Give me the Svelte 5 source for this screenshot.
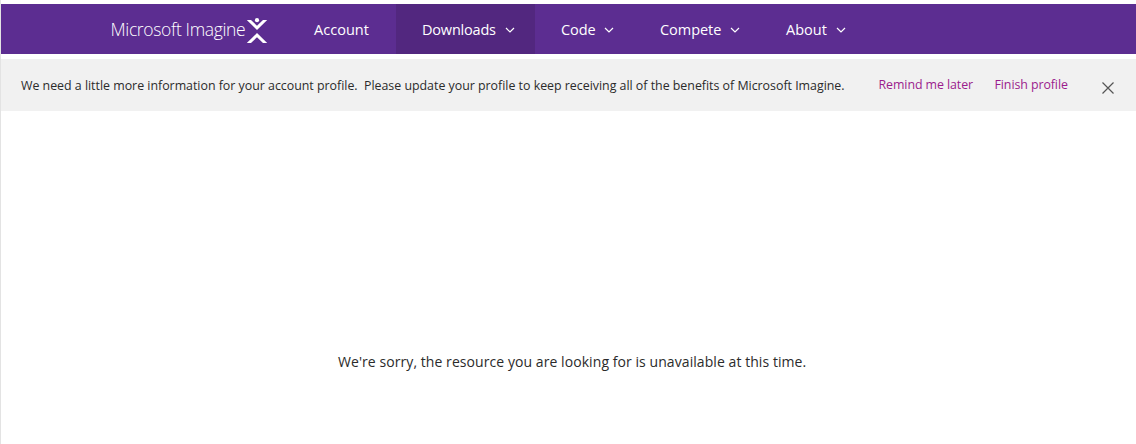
<script>
  const items = [
    { label: 'Account', width: 107, pad: 25, spacing: 0.03 },
    { label: 'Downloads', width: 139, pad: 26, spacing: -0.2, menu: true, active: true },
    { label: 'Code', width: 100, pad: 26, spacing: -0.1, menu: true },
    { label: 'Compete', width: 126, pad: 25, spacing: -0.05, menu: true },
    { label: 'About', width: 106, pad: 25, spacing: 0, menu: true }
  ];
</script>

<div class="page">
  <header>
    <a class="brand" href="#home">
      <span>Microsoft Imagine</span>
      <svg width="22" height="26" viewBox="0 0 22 26" fill="#fff">
        <circle cx="11" cy="2.2" r="2.1" />
        <path d="M.8 2H5L11 7.8L17 2H21.2L11 12Z" />
        <path d="M.8 25L11 15L21.2 25H17L11 19.2L5 25Z" />
      </svg>
    </a>
    <nav>
      {#each items as item}
        <a href="#{item.label}" class:active={item.active} style="width: {item.width}px; padding-left: {item.pad}px; letter-spacing: {item.spacing}px">
          <span>{item.label}</span>
          {#if item.menu}
            <svg width="10" height="7" viewBox="0 0 10 7" fill="none" stroke="#fff" stroke-width="1.2">
              <path d="M1 1L5 5L9 1" />
            </svg>
          {/if}
        </a>
      {/each}
    </nav>
  </header>
  <section class="notice">
    <p>We need a little more information for your account profile.&nbsp; Please update your profile to keep receiving all of the benefits of Microsoft Imagine.</p>
    <a class="later" href="#later">Remind me later</a>
    <a class="finish" href="#finish">Finish profile</a>
    <button aria-label="Close">
      <svg width="12" height="12" viewBox="0 0 12 12" fill="none" stroke="#555" stroke-width="1.2">
        <path d="M.5 .5L11.5 11.5M11.5 .5L.5 11.5" />
      </svg>
    </button>
  </section>
  <main><p>We're sorry, the resource you are looking for is unavailable at this time.</p></main>
</div>

<style>
  :global(body) { background: #fff; }
  .page {
    box-sizing: border-box;
    height: 444px;
    padding-top: 4px;
    border-left: 1px solid #e3e3e3;
    font-family: "Open Sans", "Noto Sans", sans-serif;
    color: #2b2b2b;
    overflow: hidden;
    white-space: nowrap;
  }
  a { text-decoration: none; }
  p { margin: 0; }
  svg { display: block; flex: none; }
  header { display: flex; height: 50px; background: #5c2d91; }
  .brand {
    display: flex;
    box-sizing: border-box;
    width: 288px;
    padding: 0 0 0 109.5px;
    color: #fff;
    font-size: 17.5px;
    font-weight: 300;
    letter-spacing: -0.34px;
    line-height: 50px;
  }
  .brand span { width: 135.5px; }
  .brand svg { margin-top: 14px; }
  nav { display: flex; }
  nav a {
    box-sizing: border-box;
    display: flex;
    align-items: center;
    gap: 9px;
    height: 50px;
    color: #fff;
    font-size: 14.5px;
    line-height: 20px;
  }
  nav a span { padding-top: 2px; }
  nav a svg { margin-top: 2px; }
  .active { background: #52277f; }
  .notice {
    display: flex;
    height: 52px;
    margin-top: 5px;
    background: #f1f1f1;
    font-size: 12.4px;
    letter-spacing: -0.014px;
    line-height: 54px;
  }
  .notice p { flex: none; width: 877.5px; padding-left: 20px; box-sizing: border-box; }
  .notice a { flex: none; color: #9b1c8d; line-height: 51px; letter-spacing: -0.08px; }
  .later { width: 116px; }
  .finish { width: 107.5px; }
  button { height: 52px; padding: 5px 0 0; border: 0; background: none; }
  main {
    display: flex;
    padding: 241px 0 0 337px;
    font-size: 14px;
    letter-spacing: 0.068px;
    line-height: 20px;
  }
</style>
